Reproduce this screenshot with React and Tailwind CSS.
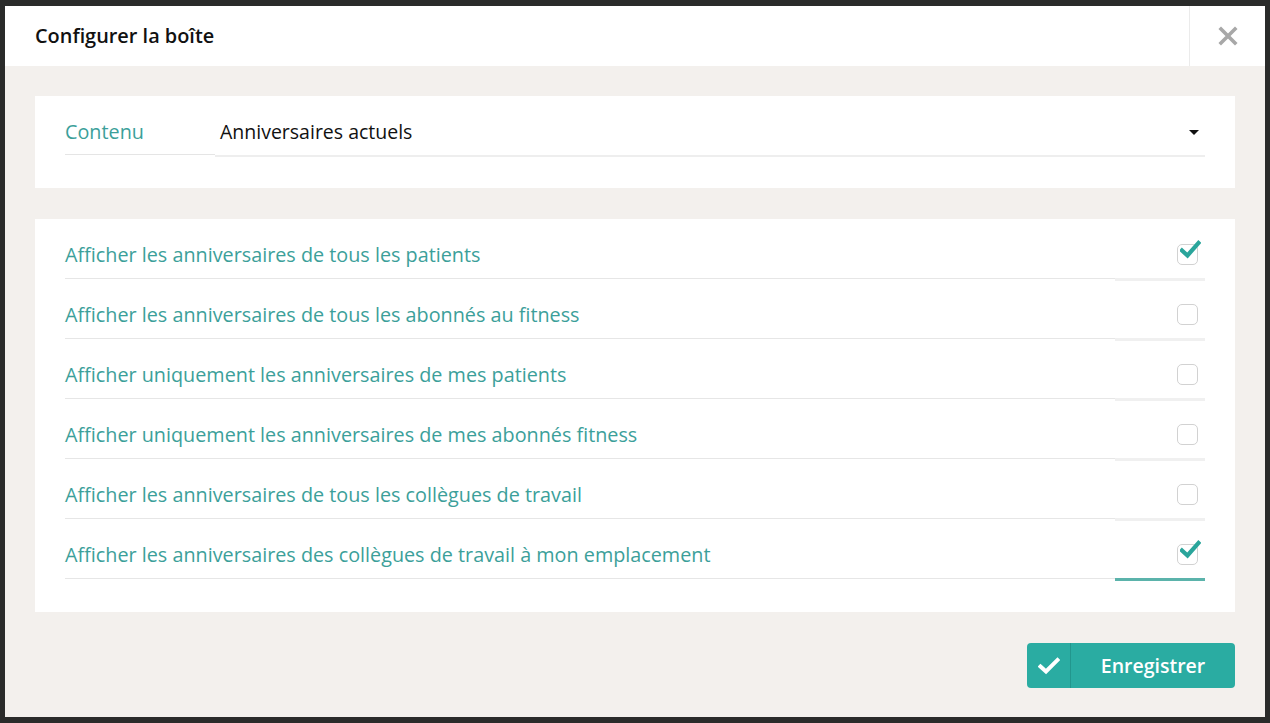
import React, { useState } from 'react';

const options = [
  { label: 'Afficher les anniversaires de tous les patients', checked: true },
  { label: 'Afficher les anniversaires de tous les abonnés au fitness', checked: false },
  { label: 'Afficher uniquement les anniversaires de mes patients', checked: false },
  { label: 'Afficher uniquement les anniversaires de mes abonnés fitness', checked: false },
  { label: 'Afficher les anniversaires de tous les collègues de travail', checked: false },
  { label: 'Afficher les anniversaires des collègues de travail à mon emplacement', checked: true, active: true },
];

const Checkbox = ({ checked, onClick }) => (
  <button onClick={onClick} className="relative w-[21px] h-[21px] rounded-[5px] border-[1.5px] border-[#d2d2d2] bg-white">
    {checked && (
      <svg className="absolute left-[2px] top-[-5px]" width="21" height="19" viewBox="0 0 21 19">
        <path d="M2 10.5 L7.5 15.5 L18.5 3" fill="none" stroke="#2aa59b" strokeWidth="4.2" strokeLinecap="square" />
      </svg>
    )}
  </button>
);

const App = () => {
  const [items, setItems] = useState(options);

  const toggle = (i) => {
    setItems(items.map((it, j) => (j === i ? { ...it, checked: !it.checked } : it)));
  };

  return (
    <div className="h-[723px] w-[1270px] bg-[#2a2b2a] pt-[6px] pb-[6px] pl-[5px] pr-[5px]" style={{ fontFamily: '"Open Sans", "Noto Sans", sans-serif' }}>
      <div className="h-full flex flex-col bg-[#f3f0ed]">
        {/* Header */}
        <div className="h-[60px] bg-white flex items-stretch">
          <div className="flex-1 flex items-center pl-[30px] text-[19.9px] font-semibold text-[#111]">
            Configurer la boîte
          </div>
          <button className="w-[76px] border-l border-[#ebebeb] flex items-center justify-center">
            <svg width="20" height="20" viewBox="0 0 20 20">
              <path d="M3 3 L17 17 M17 3 L3 17" stroke="#a8a8a8" strokeWidth="3.6" strokeLinecap="square" />
            </svg>
          </button>
        </div>

        {/* Body */}
        <div className="flex-1 px-[30px] pt-[30px] flex flex-col">
          <div className="bg-white px-[30px] pt-[23px] pb-[31px] flex items-start">
            <div className="w-[150px] border-b border-[#e5e5e5] pb-[9px] text-[19.8px] leading-[26px] text-[#3c9f9a]">
              Contenu
            </div>
            <div className="flex-1 border-b-2 border-[#eeeeee] pb-[10px] pl-[5px] flex items-center text-[19.5px] leading-[26px] text-[#111]">
              <span className="flex-1">Anniversaires actuels</span>
              <span className="mr-[6px] w-0 h-0 border-l-[5px] border-r-[5px] border-t-[5px] border-l-transparent border-r-transparent border-t-[#111]"></span>
            </div>
          </div>

          <div className="mt-[31px] bg-white px-[30px] pb-[33px]">
            {items.map((it, i) => (
              <div key={i} className="h-[60px] flex items-end">
                <div className="flex-1 border-b border-[#e6e6e6] pb-[10px] text-[19.8px] leading-[26px] text-[#3c9f9a] whitespace-nowrap">
                  {it.label}
                </div>
                <div className={`w-[90px] self-stretch flex items-end justify-end pr-[7px] pb-[13px] translate-y-[2px] border-b-[3px] ${it.active ? 'border-[#5bb3ab]' : 'border-[#f0f0f0]'}`}>
                  <Checkbox checked={it.checked} onClick={() => toggle(i)} />
                </div>
              </div>
            ))}
          </div>

          <div className="mt-[31px] flex justify-end">
            <button className="h-[45px] w-[208px] rounded-[4px] bg-[#2aaca2] flex items-stretch text-white">
              <span className="w-[44px] border-r border-[#22968d] flex items-center justify-center">
                <svg width="22" height="18" viewBox="0 0 22 18">
                  <path d="M2.5 9.5 L8 14.5 L19.5 3" fill="none" stroke="#fff" strokeWidth="4" strokeLinecap="square" />
                </svg>
              </span>
              <span className="flex-1 flex items-center justify-center text-[19.5px] font-semibold">Enregistrer</span>
            </button>
          </div>
        </div>
      </div>
    </div>
  );
};

export default App;
